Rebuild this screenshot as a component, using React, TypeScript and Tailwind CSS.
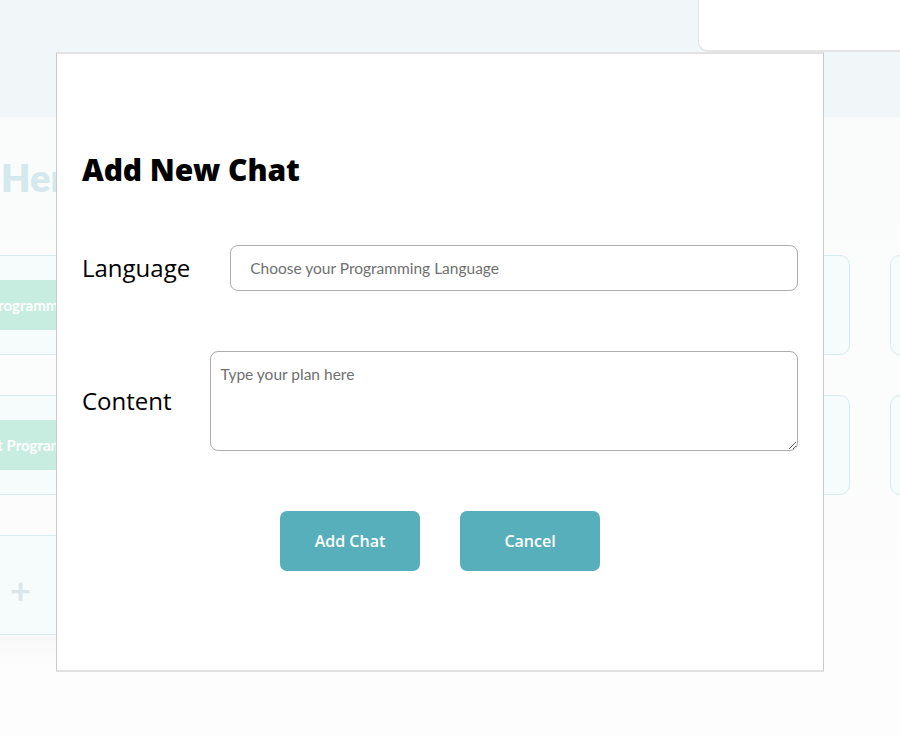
import React from "react";

function BgCard({ children, className = "" }: { children?: React.ReactNode; className?: string }) {
  return (
    <div className={"w-[270px] h-[100px] shrink-0 rounded-[10px] border border-[#d6ecf0] bg-[#f6fbfc] " + className}>
      {children}
    </div>
  );
}

export default function App() {
  return (
    <div className="relative w-[900px] h-[735px] overflow-hidden bg-[#fdfdfd] font-['Lato',sans-serif]">
      {/* background page */}
      <div className="h-[117px] bg-[#f1f7f9] flex justify-end items-start">
        <div className="w-[202px] h-[52px] bg-white rounded-bl-[10px] border-l border-b-2 border-[#e4e4e4]" />
      </div>
      <div className="bg-gradient-to-b from-[#fafbfb] to-[#fdfdfd]">
        <div className="pt-[38px] h-[138px] text-[38px] leading-[44px] font-extrabold text-[#d4e9ed] pl-[1px]">
          Here
        </div>
        <div className="flex flex-col gap-[40px] ml-[-40px]">
          <div className="flex gap-[40px]">
            <BgCard className="pt-[24px]">
              <div className="ml-[-2px] w-[150px] h-[50px] bg-[#c6ede0] text-white font-bold text-[15px] leading-[50px] pl-[30px]">
                Programming
              </div>
            </BgCard>
            <BgCard />
            <BgCard />
            <BgCard />
          </div>
          <div className="flex gap-[40px]">
            <BgCard className="pt-[24px]">
              <div className="ml-[-2px] w-[190px] h-[50px] bg-[#c6ede0] text-white font-bold text-[15px] leading-[50px] pl-[5px] whitespace-nowrap">
                Script Programming
              </div>
            </BgCard>
            <BgCard />
            <BgCard />
            <BgCard />
          </div>
          <div className="flex gap-[40px]">
            <BgCard className="flex items-center shadow-[0_16px_24px_rgba(0,0,0,0.025)]">
              <span className="ml-[49px] mt-[10px] text-[#dbe6ea] text-[36px] font-bold leading-none">+</span>
            </BgCard>
          </div>
        </div>
      </div>

      {/* modal */}
      <div className="absolute left-[56px] top-[52px] w-[768px] h-[620px] bg-white border border-[#cbcbcb] border-t-2 border-t-[#e2e2e2] border-b-2 border-b-[#e0e0e0] px-[25px] font-['Open_Sans',sans-serif]">
        <h2 className="mt-[96px] text-[30px] leading-[40px] font-extrabold text-black tracking-[-0.1px]">
          Add New Chat
        </h2>
        <div className="mt-[55px] flex items-center gap-[40px]">
          <label className="text-[24px] text-black">Language</label>
          <input
            className="flex-1 h-[46px] rounded-[8px] border border-[#adadad] px-[19px] text-[15.5px] font-['Lato',sans-serif] placeholder:text-[#707070] outline-none"
            placeholder="Choose your Programming Language"
          />
        </div>
        <div className="mt-[60px] flex items-center gap-[38px]">
          <label className="text-[24px] text-black">Content</label>
          <textarea
            className="flex-1 h-[100px] rounded-[8px] border border-[#adadad] px-[10px] py-[11px] text-[15.5px] font-['Lato',sans-serif] placeholder:text-[#707070] outline-none resize-y"
            placeholder="Type your plan here"
          />
        </div>
        <div className="mt-[60px] flex justify-center gap-[40px]">
          <button className="w-[140px] h-[60px] rounded-[7px] bg-[#57afbb] text-white text-[16px] font-semibold">
            Add Chat
          </button>
          <button className="w-[140px] h-[60px] rounded-[7px] bg-[#57afbb] text-white text-[16px] font-semibold">
            Cancel
          </button>
        </div>
      </div>
    </div>
  );
}
